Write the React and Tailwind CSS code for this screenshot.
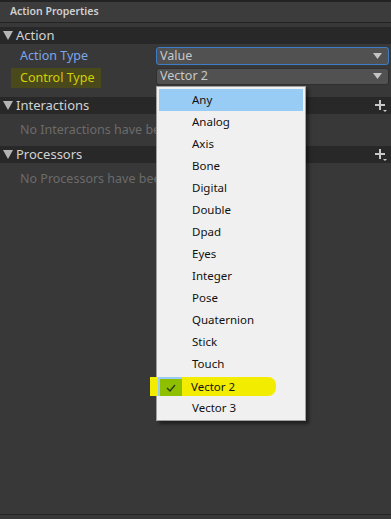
import React from 'react'

const items = ['Any', 'Analog', 'Axis', 'Bone', 'Digital', 'Double', 'Dpad', 'Eyes', 'Integer', 'Pose', 'Quaternion', 'Stick', 'Touch', 'Vector 2', 'Vector 3']

function Caret() {
  return (
    <svg width="9" height="6" viewBox="0 0 9 6" className="mr-[6px]">
      <path d="M0 0 H9 L4.5 6 Z" fill="#c4c4c4" />
    </svg>
  )
}

function Triangle() {
  return (
    <svg width="10" height="9" viewBox="0 0 10 9">
      <path d="M0 0 H10 L5 9 Z" fill="#b4b4b4" />
    </svg>
  )
}

function PlusIcon() {
  return (
    <svg width="12" height="12" viewBox="0 0 12 12" className="ml-auto">
      <path d="M4 0 H6 V4 H10 V6 H6 V10 H4 V6 H0 V4 H4 Z" fill="#c8c8c8" />
      <path d="M8 10 H12 L10 12 Z" fill="#c8c8c8" />
    </svg>
  )
}

function Section({ title, empty, plus }) {
  return (
    <div>
      <div className="flex items-center h-[17px] bg-[#282828] pl-[3px] pr-[4px]">
        <Triangle />
        <span className="ml-[3px] text-[13px] text-[#d2d2d2] leading-none">{title}</span>
        {plus && <PlusIcon />}
      </div>
      {empty && (
        <div className="w-[156px] overflow-hidden h-[32px] flex items-center pl-[20px] text-[12.5px] text-[#6b6b6b] whitespace-nowrap">
          {empty}
        </div>
      )}
    </div>
  )
}

export default function App() {
  return (
    <div
      className="relative w-[391px] h-[519px] bg-[#383838] overflow-hidden"
      style={{ fontFamily: '"Noto Sans", "Open Sans", sans-serif' }}
    >
      <div className="h-[2px] bg-[#232323]" />
      <div className="h-[21px] flex items-center pl-[10px] bg-[#3c3c3c] border-b border-[#232323] text-[10.5px] font-semibold text-[#d0d0d0]">
        Action Properties
      </div>
      <div className="pt-[4px]">
        <Section title="Action" />
        <div className="flex items-center h-[20px] mt-[2px]">
          <span className="w-[156px] pl-[20px] text-[12.5px] text-[#7ca6e8]">Action Type</span>
          <div className="flex-1 mr-[2px] h-[18px] flex items-center justify-between rounded-[3px] border border-[#3d7dc8] bg-[#515151] pl-[3px]">
            <span className="text-[12.5px] text-[#c8c8c8]">Value</span>
            <Caret />
          </div>
        </div>
        <div className="flex items-center h-[20px]">
          <div className="w-[156px] pl-[11px]">
            <span className="inline-block bg-[#4a491c] pl-[9px] pr-[7px] py-[1px] text-[12.5px] text-[#d2cf00]">Control Type</span>
          </div>
          <div className="flex-1 mr-[2px] h-[17px] flex items-center justify-between rounded-[3px] border border-[#303030] bg-[#515151] pl-[3px]">
            <span className="text-[12.5px] text-[#c8c8c8]">Vector 2</span>
            <Caret />
          </div>
        </div>
        <div className="h-[11px]" />
        <Section title="Interactions" empty="No Interactions have been added." plus />
        <Section title="Processors" empty="No Processors have been added." plus />
      </div>

      <div className="absolute left-0 right-0 top-[514px] h-[1px] bg-[#232323]" />

      <div className="absolute left-[156px] top-[86px] w-[150px] h-[335px] bg-[#f0f0f0] border border-[#a0a0a0] shadow-[3px_3px_3px_rgba(0,0,0,0.45)] p-[2px]">
        {items.map((it) => (
          <div
            key={it}
            className={`h-[22px] flex items-center pl-[33px] text-[11.5px] text-[#111] ${it === 'Any' ? 'bg-[#99ccf5]' : ''}`}
          >
            {it !== 'Vector 2' && it}
          </div>
        ))}
      </div>

      {/* yellow highlighter stroke over the selected item */}
      <div className="absolute left-[150px] top-[377px] w-[126px] h-[19px] bg-[#f2ec00] rounded-r-[8px] flex items-center">
        <div className="ml-[8px] w-[24px] h-[19px] bg-[#8fc000] border-t-[2px] border-l-[2px] border-[#99ccf5] flex items-center justify-center">
          <svg width="10" height="8" viewBox="0 0 10 8">
            <path d="M1 4 L4 7 L9 1" stroke="#2a3a10" strokeWidth="1.4" fill="none" />
          </svg>
        </div>
        <span className="ml-[9px] text-[11.5px] text-[#111]">Vector 2</span>
      </div>
    </div>
  )
}
